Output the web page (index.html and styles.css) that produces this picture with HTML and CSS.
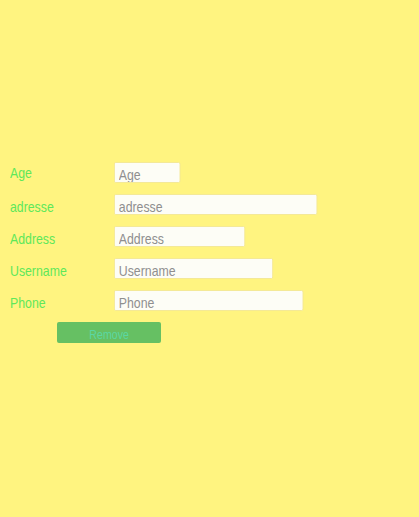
FILE: index.html
```html
<!DOCTYPE html>
<html>
<head>
<meta charset="utf-8">
<link rel="stylesheet" href="styles.css">
</head>
<body>
<form class="form">
  <div class="row"><label class="label label-first"><span class="narrow">Age</span></label><input class="field w-age" placeholder="Age"></div>
  <div class="row"><label class="label"><span class="narrow">adresse</span></label><input class="field w-adresse" placeholder="adresse"></div>
  <div class="row"><label class="label"><span class="narrow">Address</span></label><input class="field w-address" placeholder="Address"></div>
  <div class="row"><label class="label"><span class="narrow">Username</span></label><input class="field w-username" placeholder="Username"></div>
  <div class="row"><label class="label"><span class="narrow">Phone</span></label><input class="field w-phone" placeholder="Phone"></div>
  <div class="actions"><button type="button" class="remove"><span class="narrow-center">Remove</span></button></div>
</form>
</body>
</html>
```
FILE: styles.css
```css
html, body {
  margin: 0;
  padding: 0;
  background: #fff480;
  height: 100%;
}
body {
  font-family: "Liberation Sans", Arial, sans-serif;
  font-size: 15px;
}
.form {
  padding: 162px 0 0 10px;
  display: flex;
  flex-direction: column;
  gap: 11px;
}
.row {
  display: flex;
  align-items: flex-start;
  height: 21px;
}
.label {
  box-sizing: border-box;
  flex: 0 0 104px;
  height: 21px;
  padding-top: 2px;
  line-height: 21px;
  color: #5ee85a;
  font-size: 15px;
}
.label-first {
  padding-top: 0;
}
.narrow {
  display: inline-block;
  transform: scaleX(0.82);
  transform-origin: 0 50%;
}
.narrow-center {
  display: inline-block;
  transform: scaleX(0.82);
  transform-origin: 50% 50%;
}
.field {
  box-sizing: border-box;
  flex: none;
  height: 21px;
  margin: 0;
  padding: 4px 4.9px 0;
  border: 1px solid #f3e793;
  border-radius: 2px;
  background: #fdfdf6;
  font-family: "Liberation Sans", Arial, sans-serif;
  font-size: 15px;
  color: #888;
  outline: none;
  transform: scaleX(0.82);
  transform-origin: 0 50%;
}
.field::placeholder {
  color: #8f8f8f;
}
.w-age { width: 80.5px; }
.w-adresse { width: 247.6px; }
.w-address { width: 159.8px; }
.w-username { width: 193.9px; }
.w-phone { width: 230.5px; }
.actions {
  display: flex;
  padding-left: 47px;
}
.remove {
  box-sizing: border-box;
  width: 104px;
  height: 21px;
  margin: 0;
  padding: 3px 0 0;
  border: none;
  border-radius: 2px;
  background: #66c063;
  color: #5ad7a2;
  font-family: "Liberation Sans", Arial, sans-serif;
  font-size: 13px;
}
```
